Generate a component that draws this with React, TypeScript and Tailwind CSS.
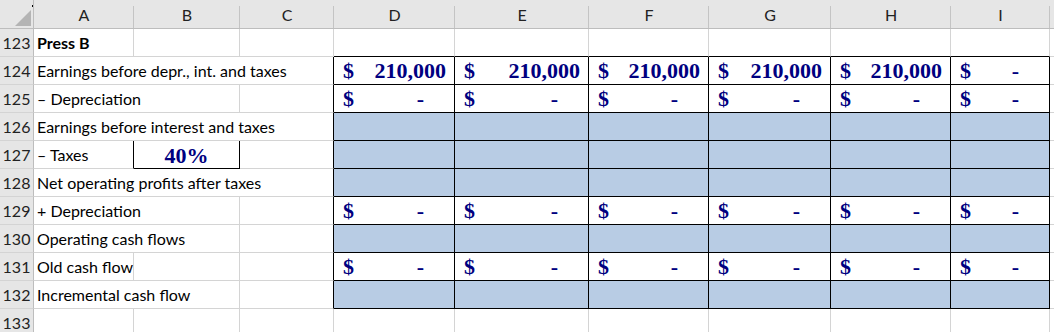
import React from "react";

type Kind = "none" | "val" | "dash" | "fill";

type Row = {
  n: number;
  label?: string;
  bold?: boolean;
  span: number;
  kind: Kind;
  values?: (number | null)[];
};

const cols = ["A", "B", "C", "D", "E", "F", "G", "H", "I"];

const rows: Row[] = [
  { n: 123, label: "Press B", bold: true, span: 1, kind: "none" },
  {
    n: 124,
    label: "Earnings before depr., int. and taxes",
    span: 3,
    kind: "val",
    values: [210000, 210000, 210000, 210000, 210000, null],
  },
  { n: 125, label: "– Depreciation", span: 2, kind: "dash" },
  { n: 126, label: "Earnings before interest and taxes", span: 3, kind: "fill" },
  { n: 127, label: "– Taxes", span: 1, kind: "fill" },
  { n: 128, label: "Net operating profits after taxes", span: 3, kind: "fill" },
  { n: 129, label: "+ Depreciation", span: 2, kind: "dash" },
  { n: 130, label: "Operating cash flows", span: 2, kind: "fill" },
  { n: 131, label: "Old cash flow", span: 1, kind: "dash" },
  { n: 132, label: "Incremental cash flow", span: 2, kind: "fill" },
  { n: 133, span: 1, kind: "none" },
];

const spanClass: Record<number, string> = {
  1: "col-span-1",
  2: "col-span-2",
  3: "col-span-3",
};

const inBox = (r: number) => r >= 124 && r <= 132;

// right/bottom border colour of a body cell, like excel: each cell owns its right + bottom edge
const rightBorder = (r: number, c: number) => {
  if (c >= 2 && inBox(r)) return "border-r-black";
  if (r === 127 && c <= 1) return "border-r-black";
  return "border-r-[#d4d4d4]";
};

const bottomBorder = (r: number, c: number) => {
  if (c >= 3 && r >= 123 && r <= 132) return "border-b-black";
  if (c === 1 && (r === 126 || r === 127)) return "border-b-black";
  return "border-b-[#d4d4d4]";
};

const serif = "font-['Liberation_Serif',serif] font-bold text-[22px] text-[#000080]";

const ValueCell = ({ row, c }: { row: Row; c: number }) => {
  const base = `h-[28px] border-r border-b ${rightBorder(row.n, c)} ${bottomBorder(row.n, c)}`;
  if (row.kind === "fill") return <div className={`${base} bg-[#b8cce4]`} />;
  if (row.kind === "none") return <div className={base} />;
  const v = row.kind === "val" ? row.values?.[c - 3] ?? null : null;
  return (
    <div className={`${base} ${serif} flex items-center justify-between pl-[9px] leading-none`}>
      <span className="pt-[1px]">$</span>
      {v === null ? (
        <span className="pr-[30px] pt-[1px]">-</span>
      ) : (
        <span className="pr-[8px] pt-[1px]">{v.toLocaleString("en-US")}</span>
      )}
    </div>
  );
};

const BodyRow = ({ row }: { row: Row }) => {
  const cells: React.ReactNode[] = [];
  cells.push(
    <div
      key="h"
      className="h-[28px] bg-[#e6e6e6] border-r border-b border-r-[#bdbdbd] border-b-[#d4d4d4] flex items-center justify-center text-[#222] pt-[1px]"
    >
      {row.n}
    </div>
  );
  const last = row.span - 1;
  cells.push(
    <div
      key="lbl"
      className={`${spanClass[row.span]} h-[28px] border-r border-b ${rightBorder(row.n, last)} ${bottomBorder(
        row.n,
        0
      )} flex items-center pl-[3px] pt-[1px] whitespace-nowrap ${row.bold ? "font-bold" : ""}`}
    >
      {row.label}
    </div>
  );
  for (let c = row.span; c < 3; c++) {
    const isTax = row.n === 127 && c === 1;
    cells.push(
      <div
        key={c}
        className={`h-[28px] border-r border-b ${rightBorder(row.n, c)} ${bottomBorder(row.n, c)} ${
          isTax ? `${serif} flex items-center justify-center pt-[1px]` : ""
        }`}
      >
        {isTax ? "40%" : null}
      </div>
    );
  }
  for (let c = 3; c < 9; c++) cells.push(<ValueCell key={c} row={row} c={c} />);
  cells.push(<div key="x" className="h-[28px] border-b border-b-[#d4d4d4]" />);
  return <>{cells}</>;
};

export default function App() {
  return (
    <div className="w-[1054px] h-[332px] overflow-hidden bg-white font-['Lato','Noto_Sans',sans-serif] text-[16px] text-black">
      <div className="grid grid-cols-[34px_100px_106px_94px_121px_134px_120px_122px_120px_99px_1fr]">
        <div className="h-[29px] bg-[#e6e6e6] border-r border-b border-r-[#bdbdbd] border-b-[#bdbdbd]">
          <svg width="33" height="28" viewBox="0 0 33 28">
            <polygon points="31,10 31,26 15,26" fill="#b4b4b4" />
            <rect x="32" y="5" width="1" height="2" fill="#000" />
          </svg>
        </div>
        {cols.map((c) => (
          <div
            key={c}
            className="relative h-[29px] bg-[#e6e6e6] border-b border-b-[#bdbdbd] flex items-center justify-center text-[#222] pt-[1px] after:absolute after:right-0 after:top-[6px] after:bottom-0 after:w-px after:bg-[#c4c4c4]"
          >
            {c}
          </div>
        ))}
        <div className="h-[29px] bg-[#e6e6e6] border-b border-b-[#bdbdbd]" />
        {rows.map((r) => (
          <BodyRow key={r.n} row={r} />
        ))}
      </div>
    </div>
  );
}
